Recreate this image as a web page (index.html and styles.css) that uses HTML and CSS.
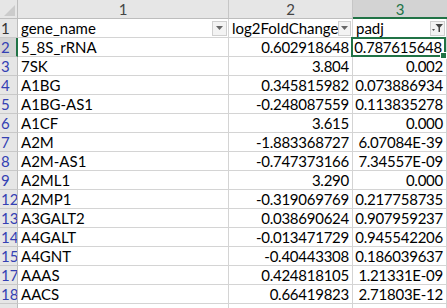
FILE: index.html
```html
<!DOCTYPE html>
<html>
<head>
<meta charset="utf-8">
<link rel="stylesheet" href="styles.css">
</head>
<body>
<div class="sheet">
  <div class="corner"><svg class="corner-tri" width="11" height="11" viewBox="0 0 11 11"><polygon points="11,0 11,11 0,11" fill="#cbcbcb"/></svg></div>
  <div class="colhead">1</div>
  <div class="colhead">2</div>
  <div class="colhead sel">3</div>

  <div class="rowhead plain">1</div>
  <div class="cell hdr"><span>gene_name</span><span class="fbtn"><svg width="7" height="4" viewBox="0 0 7 4"><polygon points="0,0 7,0 3.5,4" fill="#666"/></svg></span></div>
  <div class="cell hdr"><span>log2FoldChange</span><span class="fbtn"><svg width="7" height="4" viewBox="0 0 7 4"><polygon points="0,0 7,0 3.5,4" fill="#666"/></svg></span></div>
  <div class="cell hdr"><span>padj</span><span class="fbtn"><svg width="11" height="9" viewBox="0 0 11 9"><polygon points="0,5 3,5 1.5,7" fill="#555"/><polygon points="3.5,0 11,0 8,3.5 8,8 6.5,8 6.5,3.5" fill="#444"/></svg></span></div>

  <div class="rowhead selrow">2</div>
  <div class="cell">5_8S_rRNA</div>
  <div class="cell num">0.602918648</div>
  <div class="cell num active">0.787615648<span class="handle"></span></div>

  <div class="rowhead">3</div>
  <div class="cell">7SK</div>
  <div class="cell num">3.804</div>
  <div class="cell num">0.002</div>

  <div class="rowhead">4</div>
  <div class="cell">A1BG</div>
  <div class="cell num">0.345815982</div>
  <div class="cell num">0.073886934</div>

  <div class="rowhead">5</div>
  <div class="cell">A1BG-AS1</div>
  <div class="cell num">-0.248087559</div>
  <div class="cell num">0.113835278</div>

  <div class="rowhead">6</div>
  <div class="cell">A1CF</div>
  <div class="cell num">3.615</div>
  <div class="cell num">0.000</div>

  <div class="rowhead">7</div>
  <div class="cell">A2M</div>
  <div class="cell num">-1.883368727</div>
  <div class="cell num">6.07084E-39</div>

  <div class="rowhead">8</div>
  <div class="cell">A2M-AS1</div>
  <div class="cell num">-0.747373166</div>
  <div class="cell num">7.34557E-09</div>

  <div class="rowhead">9</div>
  <div class="cell">A2ML1</div>
  <div class="cell num">3.290</div>
  <div class="cell num">0.000</div>

  <div class="rowhead">12</div>
  <div class="cell">A2MP1</div>
  <div class="cell num">-0.319069769</div>
  <div class="cell num">0.217758735</div>

  <div class="rowhead">13</div>
  <div class="cell">A3GALT2</div>
  <div class="cell num">0.038690624</div>
  <div class="cell num">0.907959237</div>

  <div class="rowhead">14</div>
  <div class="cell">A4GALT</div>
  <div class="cell num">-0.013471729</div>
  <div class="cell num">0.945542206</div>

  <div class="rowhead">15</div>
  <div class="cell">A4GNT</div>
  <div class="cell num">-0.40443308</div>
  <div class="cell num">0.186039637</div>

  <div class="rowhead">17</div>
  <div class="cell">AAAS</div>
  <div class="cell num">0.424818105</div>
  <div class="cell num">1.21331E-09</div>

  <div class="rowhead">18</div>
  <div class="cell">AACS</div>
  <div class="cell num">0.66419823</div>
  <div class="cell num">2.71803E-12</div>

  <div class="rowhead"></div>
  <div class="cell"></div>
  <div class="cell"></div>
  <div class="cell"></div>
</div>
</body>
</html>
```
FILE: styles.css
```css
html, body {
  margin: 0;
  padding: 0;
  background: #ffffff;
  overflow: hidden;
}
.sheet {
  display: grid;
  grid-template-columns: 18px 211px 124px 94px;
  grid-auto-rows: 19px;
  font-family: Lato, "Liberation Sans", sans-serif;
  font-size: 15px;
  color: #000;
  width: 447px;
}
.sheet > div {
  box-sizing: border-box;
  white-space: nowrap;
  overflow: hidden;
  line-height: 18px;
}
.corner {
  background: #e6e6e6;
  border-right: 1px solid #bdbdbd;
  border-bottom: 1px solid #bdbdbd;
  display: flex;
  align-items: flex-end;
  justify-content: flex-end;
  padding: 0 2px 2px 0;
}
.corner-tri { display: block; }
.colhead {
  background: #e6e6e6;
  border-right: 1px solid #c6c6c6;
  border-bottom: 1px solid #bdbdbd;
  text-align: center;
  color: #444;
}
.colhead.sel {
  background: #d3d3d3;
  color: #217346;
  border-bottom: 2px solid #217346;
  border-right: none;
}
.rowhead {
  background: #e6e6e6;
  border-right: 1px solid #bdbdbd;
  border-bottom: 1px solid #c9c9c9;
  color: #3340b3;
  padding-left: 1px;
}
.rowhead.plain { color: #333; }
.rowhead.selrow {
  background: #d3d3d3;
  border-right: 2px solid #217346;
}
.cell {
  border-right: 1px solid #d4d4d4;
  border-bottom: 1px solid #d4d4d4;
  padding: 0 3px 0 3px;
}
.cell.num {
  text-align: right;
  padding-right: 3px;
  padding-left: 0;
  letter-spacing: -0.25px;
}
.cell.hdr {
  display: flex;
  justify-content: space-between;
  align-items: center;
  padding-right: 1px;
}
.fbtn {
  width: 15px;
  height: 15px;
  box-sizing: border-box;
  border: 1px solid #d0d0d0;
  background: #f3f3f3;
  display: flex;
  align-items: center;
  justify-content: center;
}
.cell.active {
  position: relative;
  overflow: visible;
  padding-right: 4px;
}
.cell.active::before {
  content: "";
  position: absolute;
  left: -2px;
  top: -1px;
  right: 0;
  bottom: -1px;
  border: 2px solid #217346;
  pointer-events: none;
}
.handle {
  position: absolute;
  right: -1px;
  bottom: -3px;
  width: 5px;
  height: 5px;
  background: #217346;
  border: 1px solid #fff;
}
```
